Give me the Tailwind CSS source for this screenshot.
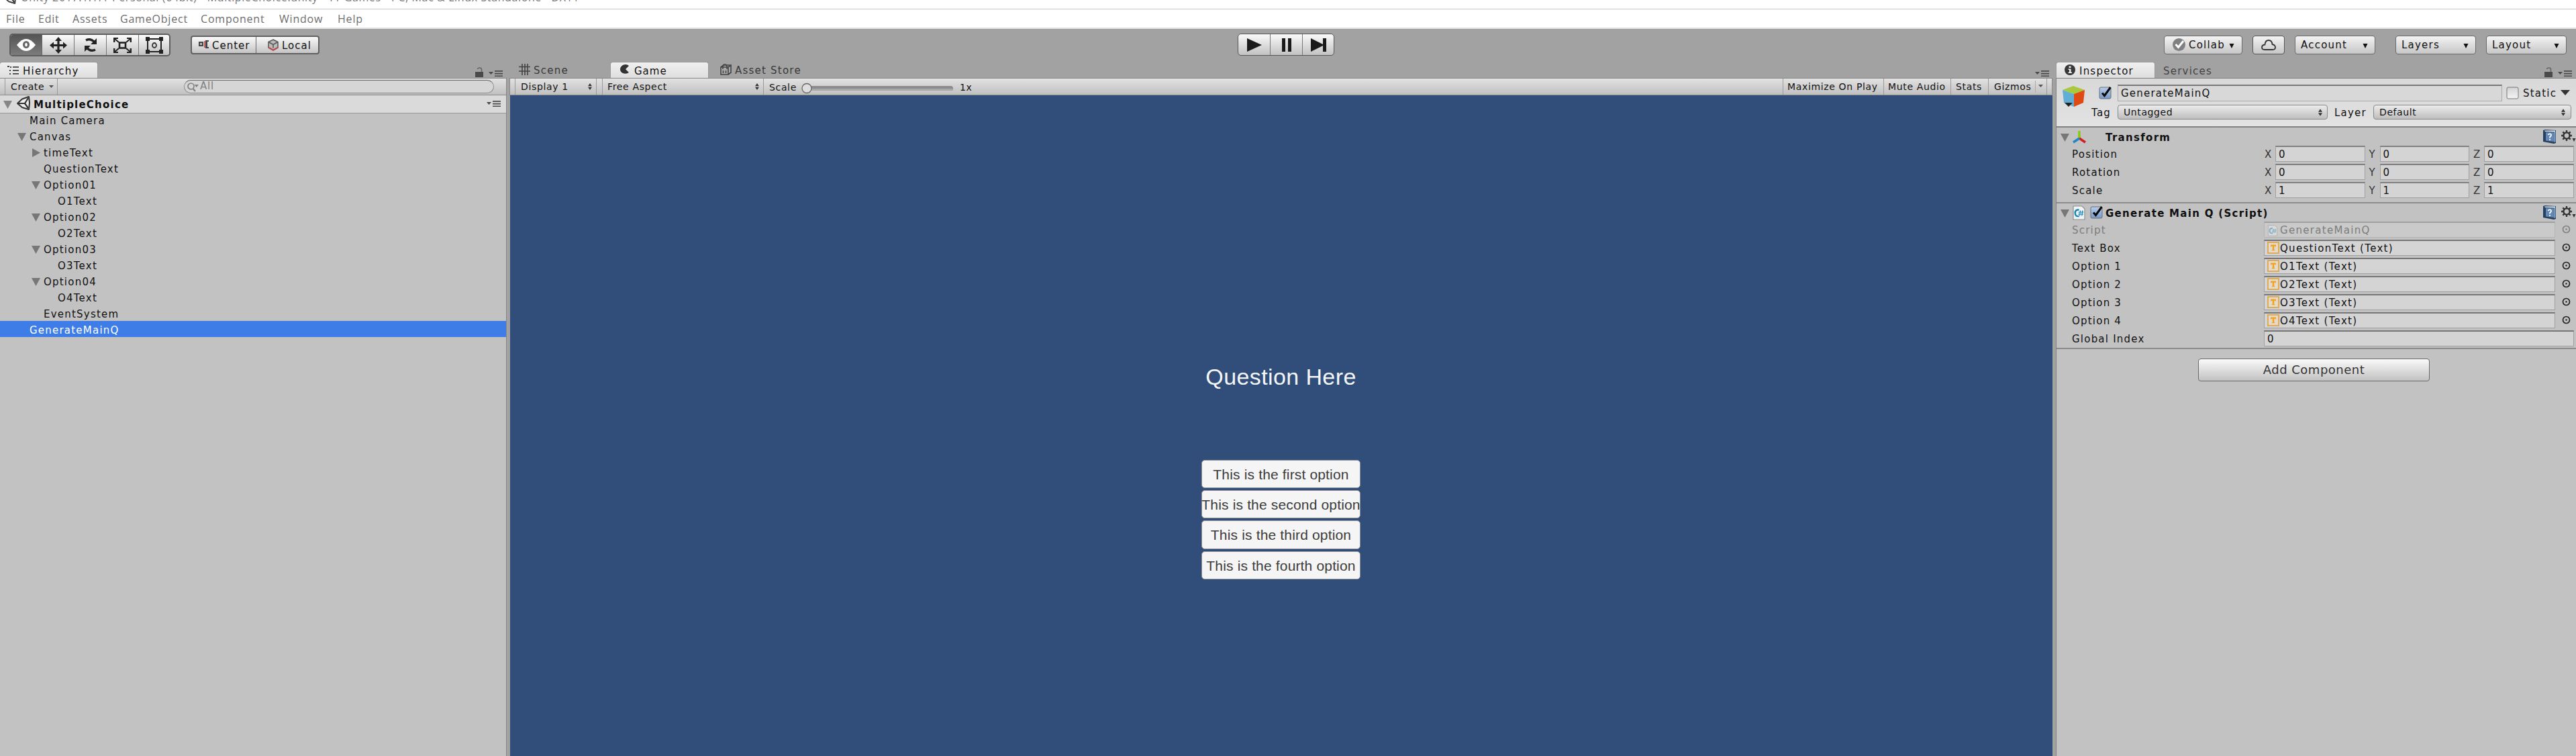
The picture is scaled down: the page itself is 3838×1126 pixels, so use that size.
<!DOCTYPE html>
<html lang="en">
<head>
<meta charset="utf-8">
<title>Unity</title>
<script src="https://cdn.jsdelivr.net/npm/@tailwindcss/browser@4"></script>
</head>
<body class="w-[3838px] h-[1126px] overflow-hidden flex flex-col bg-[#a2a2a2] font-['DejaVu_Sans',sans-serif] text-[15px] tracking-[1.22px] text-[#111] whitespace-nowrap">
<svg class="absolute size-0">
  <symbol id="unity" viewBox="0 0 20 22"><path fill="#eee" stroke="#333" stroke-width="2" stroke-linejoin="round" d="M1 11 8 4.5 18 1 19 10 18 20 8 17z"/><path fill="none" stroke="#333" stroke-width="2.2" d="M2 11h10M12 11l5-8M12 11l5 7"/></symbol>
  <symbol id="down" viewBox="0 0 10 10"><path fill="currentColor" d="M0 0h10L5 10z"/></symbol>
  <symbol id="updown" viewBox="0 0 7 12"><path fill="#333" d="M3.5 0 7 5H0zM0 7h7L3.5 12z"/></symbol>
  <symbol id="lock" viewBox="0 0 12 15"><path fill="#4a4a4a" d="M0 7h12v8H0z"/><path fill="none" stroke="#666" stroke-width="1.6" d="M9.5 7V3.5Q9.500 1 6.500 1 4 1 3.500 3"/></symbol>
  <symbol id="menu" viewBox="0 0 21 10"><path fill="#4a4a4a" d="M0 2h7L3.500 6zM9 0h12v1.700H9zM9 3.700h12v1.700H9zM9 7.400h12v1.700H9z"/></symbol>
  <symbol id="check" viewBox="0 0 20 20"><rect x="1" y="2" width="17" height="17" rx="2" fill="url(#gCheck)" stroke="#66707e"/><path fill="none" stroke="#0a0a0a" stroke-width="3" d="M5 10.500 8.500 14.500 17.500 2"/></symbol>
  <symbol id="box" viewBox="0 0 20 20"><rect x="1" y="2" width="17" height="17" rx="2" fill="url(#gBox)" stroke="#777"/></symbol>
  <symbol id="book" viewBox="0 0 20 21"><path fill="#27405f" d="M0 1 3 0 19 1V20L16 21 0 18z"/><path fill="#dfe9f5" d="M2 1.500 18 1.500V3.500L3 3z"/><path fill="#6288b8" d="M4 4 16 4.500V18L4 16.500z"/><path fill="#8fadd1" d="M16.500 3h1.800v15l-1.800 1z"/><path fill="none" stroke="#fff" stroke-width="1.700" d="M7.500 8Q8 6.300 10 6.400 12.500 6.500 12 8.500 11.800 9.500 10 11v1.500M10 14v2"/></symbol>
  <symbol id="gear" viewBox="0 0 22 18"><circle cx="8" cy="8" r="4.600" fill="none" stroke="#333" stroke-width="2.400"/><g stroke="#333" stroke-width="2.400"><path d="M8 0v3M8 13v3M0 8h3M13 8h3M2.300 2.300l2.200 2.200M11.500 11.500l2.200 2.200M2.300 13.700l2.200-2.200M11.500 4.500l2.200-2.200"/></g><path fill="#333" d="M16.500 12h5L19 17z"/></symbol>
  <symbol id="txt" viewBox="0 0 18 18"><rect x="1" y="1" width="16" height="16" fill="#e2dccf" stroke="#e2a64c" stroke-width="1.800"/><path fill="#f9a01b" d="M5 4.500h8V7.500H11.800V6.800H10.300V12H11.300V13.300H6.800V12H7.800V6.800H6.300V7.500H5z"/></symbol>
  <symbol id="cs" viewBox="0 0 19 22"><path fill="#f0f4f6" stroke="#8c8c8c" stroke-width="1.200" d="M1 1h13l4 4v16H1z"/><path fill="none" stroke="#1683b5" stroke-width="2.400" d="M9.500 6.500Q3.500 6 3.800 11.500 4 17 9.500 16"/><path fill="none" stroke="#1683b5" stroke-width="1.200" d="M11.500 7.500 10.500 15.500M14.800 7.500 13.800 15.500M8.500 10h8M8 13h8"/></symbol>
  <symbol id="pick" viewBox="0 0 13 13"><circle cx="6.500" cy="6.500" r="5" fill="none" stroke="currentColor" stroke-width="1.700"/><circle cx="6.500" cy="6.500" r="1.200" fill="currentColor"/></symbol>
  <linearGradient id="gCheck" x2="0" y2="1"><stop stop-color="#b9cde8"/><stop offset="1" stop-color="#7698c8"/></linearGradient>
  <linearGradient id="gBox" x2="0" y2="1"><stop stop-color="#d4d4d4"/><stop offset="1" stop-color="#f4f4f4"/></linearGradient>
</svg>

<!-- Window title -->
<div class="h-[14px] shrink-0 bg-white border-b border-[#c8c8c8] overflow-hidden flex items-start pl-[6px] font-['Open_Sans',sans-serif] text-[16px] text-[#777] tracking-[0.62px]">
  <svg class="w-[18px] h-[20px] -mt-[13px]"><use href="#unity"/></svg>
  <span class="ml-[7px] -mt-[10px] leading-[13px]">Unity 2017.1.1f1 Personal (64bit) - MultipleChoice.unity - TT Games - PC, Mac &amp; Linux Standalone &lt;DX11&gt;</span>
</div>

<!-- Menu -->
<nav class="h-[29px] shrink-0 bg-white border-b-2 border-[#e4e4e4] flex font-['Open_Sans',sans-serif] text-[16px] text-[#6e6e6e] tracking-[0.8px] leading-[28px] pl-[9px]">
  <span class="w-[48px]">File</span><span class="w-[51px]">Edit</span><span class="w-[71px]">Assets</span><span class="w-[120px]">GameObject</span><span class="w-[117px]">Component</span><span class="w-[87px]">Window</span><span>Help</span>
</nav>

<!-- Main toolbar -->
<header class="h-[49px] shrink-0 flex items-start">
  <div class="ml-[14px] mt-[7px] w-[240px] h-[34px] flex rounded-[5px] border-2 border-[#5c5c5c] bg-linear-to-b from-[#fcfcfc] to-[#c2c2c2] overflow-hidden">
    <div class="w-[47px] flex items-center justify-center bg-linear-to-b from-[#555] to-[#7c7c7c] border-r border-[#666]"><svg class="w-[28px] h-[20px]" viewBox="0 0 28 20"><path fill="#fff" d="M0 10Q14-8 28 10 14 28 0 10z"/><ellipse cx="14" cy="9.500" rx="5" ry="5.500" fill="#666"/><ellipse cx="14" cy="9.500" rx="1.800" ry="2.800" fill="#fff"/></svg></div>
    <div class="w-[48px] flex items-center justify-center border-r border-[#777]"><svg class="w-[26px] h-[25px]" viewBox="0 0 26 25"><path fill="#222" d="M13 0 18 6H14.600V11H20V7.500L26 12.500 20 17.500V14H14.600V19H18L13 25 8 19h3.400V14H6v3.500L0 12.500 6 7.500V11h5.400V6H8z"/></svg></div>
    <div class="w-[48px] flex items-center justify-center border-r border-[#777]"><svg class="w-[22px] h-[22px]" viewBox="0 0 22 22"><path fill="none" stroke="#222" stroke-width="3.400" d="M4 4Q11 .5 17 7M18 18Q11 21.500 5 15"/><path fill="#222" d="M20 1v9h-9zM2 21v-9h9z"/></svg></div>
    <div class="w-[48px] flex items-center justify-center border-r border-[#777]"><svg class="w-[27px] h-[23px]" viewBox="0 0 27 23"><rect x="9" y="7.500" width="9" height="8" fill="none" stroke="#222" stroke-width="2.600"/><path stroke="#222" stroke-width="2" d="M1 1 8 7M26 1 19 7M1 22 8 16M26 22 19 16"/><path fill="#222" d="M0 0h7v2H2.400v5H0zM27 0h-7v2h4.600v5H27zM0 23h7v-2H2.400v-5H0zM27 23h-7v-2h4.600v-5H27z"/></svg></div>
    <div class="flex-1 flex items-center justify-center"><svg class="w-[26px] h-[25px]" viewBox="0 0 26 25"><path fill="none" stroke="#222" stroke-width="2" d="M3 3h20v19H3z"/><path fill="#222" d="M0 0h6v6H0zM20 0h6v6h-6zM0 19h6v6H0zM20 19h6v6h-6z"/><ellipse cx="13" cy="12.500" rx="3" ry="3.500" fill="none" stroke="#333" stroke-width="1.800"/></svg></div>
  </div>
  <div class="ml-[30px] mt-[10px] w-[192px] h-[28px] flex rounded-[4px] border-2 border-[#606060] bg-linear-to-b from-[#fafafa] to-[#c4c4c4] leading-[26px]">
    <div class="w-[96px] flex pl-[10px] border-r border-[#666]"><svg class="w-[16px] h-[12px] mt-[5px]" viewBox="0 0 16 12"><path fill="#444" d="M0 2h7v7H0zM10 0h5v2h-2v8h2v2h-5z"/><path fill="#bbb" d="M2 4h3v3H2z"/><path fill="#c44" d="M8 1h1.500v10H8z"/></svg><span class="ml-[4px] tracking-[1px]">Center</span></div>
    <div class="flex pl-[17px]"><svg class="w-[16px] h-[18px] mt-[3px]" viewBox="0 0 16 18"><path fill="#bbb" stroke="#555" stroke-width="1.500" d="M8 1 15 4.500V13L8 17 1 13V4.500z"/><path fill="none" stroke="#555" stroke-width="1.500" d="M1 4.500 8 8.500 15 4.500M8 8.500v5"/><path fill="none" stroke="#c9434a" stroke-width="2" d="M1 12.500 8 16.500 15 12.500"/></svg><span class="ml-[5px] tracking-[1px]">Local</span></div>
  </div>
  <div class="ml-[1368px] mt-[7px] w-[144px] h-[33px] flex rounded-[5px] border-[1.500px] border-[#555] bg-linear-to-b from-[#fafafa] to-[#c2c2c2]">
    <div class="w-[48px] flex items-center justify-center border-r border-[#777]"><svg class="w-[22px] h-[20px]" viewBox="0 0 22 20"><path fill="#1a1a1a" d="M0 0 22 10 0 20z"/></svg></div>
    <div class="w-[48px] flex items-center justify-center border-r border-[#777]"><svg class="w-[14px] h-[20px]" viewBox="0 0 14 20"><path fill="#1a1a1a" d="M0 0h5v20H0zM9 0h5v20H9z"/></svg></div>
    <div class="flex-1 flex items-center justify-center"><svg class="w-[23px] h-[20px]" viewBox="0 0 23 20"><path fill="#1a1a1a" d="M0 0 18 9V0h5v20h-5V11L0 20z"/></svg></div>
  </div>
  <div class="ml-[1236px] mt-[10px] flex leading-[26px]">
    <div class="w-[117px] h-[28px] flex items-start rounded-[4px] border-[1.500px] border-[#6a6a6a] bg-linear-to-b from-[#f4f4f4] to-[#c6c6c6] pl-[12px]"><svg class="w-[19px] h-[19px] mt-[3px]" viewBox="0 0 19 19"><circle cx="9.500" cy="9.500" r="9.500" fill="#808080"/><path fill="none" stroke="#fff" stroke-width="3" d="M4.500 9 8.500 13.500 16 4"/></svg><span class="ml-[5px] w-[60px]">Collab</span><svg class="w-[8px] h-[7px] mt-[11px]"><use href="#down"/></svg></div>
    <div class="ml-[15px] w-[48px] h-[28px] flex items-center justify-center rounded-[4px] border-[1.500px] border-[#555] bg-linear-to-b from-[#f4f4f4] to-[#c6c6c6]"><svg class="w-[22px] h-[16px]" viewBox="0 0 22 16"><path fill="none" stroke="#333" stroke-width="1.800" d="M5 15Q1 15 1 11.500 1 8 5.500 7.500 6 1 11 1q5 0 5.500 6Q21 8 21 11.500 21 15 17 15z"/></svg></div>
    <div class="ml-[15px] w-[120px] h-[28px] flex items-start rounded-[4px] border-[1.500px] border-[#6a6a6a] bg-linear-to-b from-[#f4f4f4] to-[#c6c6c6] pl-[8px]"><span class="w-[92px]">Account</span><svg class="w-[8px] h-[7px] mt-[11px]"><use href="#down"/></svg></div>
    <div class="ml-[30px] w-[120px] h-[28px] flex items-start rounded-[4px] border-[1.500px] border-[#6a6a6a] bg-linear-to-b from-[#f4f4f4] to-[#c6c6c6] pl-[8px]"><span class="w-[92px]">Layers</span><svg class="w-[8px] h-[7px] mt-[11px]"><use href="#down"/></svg></div>
    <div class="ml-[15px] w-[120px] h-[28px] flex items-start rounded-[4px] border-[1.500px] border-[#6a6a6a] bg-linear-to-b from-[#f4f4f4] to-[#c6c6c6] pl-[8px]"><span class="w-[92px]">Layout</span><svg class="w-[8px] h-[7px] mt-[11px]"><use href="#down"/></svg></div>
  </div>
</header>

<main class="flex flex-1 min-h-0">
  <!-- Hierarchy -->
  <section class="w-[755px] flex flex-col">
    <div class="h-[24px] flex items-start leading-[28px]">
      <div class="w-[146px] h-[24px] flex rounded-t-[4px] bg-linear-to-b from-[#f0f0f0] to-[#dedede] border-r border-t border-[#999] pl-[11px]"><svg class="w-[17px] h-[13px] mt-[5px]" viewBox="0 0 17 13"><path fill="#444" d="M0 0h3v2H0zM4 1h2v2H4zM8 1h9v1.700H8zM3 6h2v2H3zM8 6h9v1.700H8zM3 11h2v2H3zM8 11h9v1.700H8z"/></svg><span class="ml-[6px] -mt-px">Hierarchy</span></div>
      <svg class="ml-[562px] mt-[8px] w-[12px] h-[15px]"><use href="#lock"/></svg>
      <svg class="ml-[8px] mt-[13px] w-[21px] h-[10px]"><use href="#menu"/></svg>
    </div>
    <div class="h-[26px] flex items-start border-t border-b border-[#888] border-r bg-linear-to-b from-[#e2e2e2] to-[#c0c0c0] text-[14px] tracking-[0.6px] leading-[25px]">
      <div class="ml-[7px] w-[79px] h-[24px] border-x border-[#999] flex items-start pl-[8px]"><span class="w-[57px]">Create</span><svg class="w-[7px] h-[4px] mt-[10px] text-[#555]" viewBox="0 0 10 10" preserveAspectRatio="none"><path fill="currentColor" d="M0 0h10L5 10z"/></svg></div>
      <div class="ml-[188px] mt-[2px] w-[462px] h-[20px] rounded-full border-[1.500px] border-[#8c8c8c] border-t-[#666] bg-[#d6d6d6] flex items-start pl-[4px] text-[15px] text-[#808080] leading-[16px]"><svg class="w-[17px] h-[14px] mt-[3px]" viewBox="0 0 17 14"><ellipse cx="5.500" cy="5.500" rx="4.500" ry="4.500" fill="none" stroke="#808080" stroke-width="1.700"/><path stroke="#808080" stroke-width="2" d="M8.500 9 12 13"/><path fill="#808080" d="M10.500 3h6.500L13.700 7z"/></svg><span class="ml-[2px] tracking-[0.8px]">All</span></div>
    </div>
    <div class="flex-1 bg-[#c2c2c2] border-r border-[#888]">
      <div class="h-[27px] flex items-start bg-[#dadada] border-b border-[#999]">
        <svg class="ml-[5px] mt-[8px] w-[13px] h-[12px] text-[#868686]" viewBox="0 0 10 10" preserveAspectRatio="none"><path fill="currentColor" d="M0 0h10L5 10z"/></svg>
        <svg class="ml-[7px] mt-[1px] w-[20px] h-[22px]"><use href="#unity"/></svg>
        <b class="ml-[5px] w-[675px] leading-[28px]">MultipleChoice</b>
        <svg class="mt-[8px] w-[21px] h-[10px]"><use href="#menu"/></svg>
      </div>
      <ul class="-mt-[3px] leading-[28px]" id="tree"></ul>
    </div>
  </section>

  <!-- Game view -->
  <section class="ml-[4px] w-[2299px] flex flex-col">
    <div class="h-[24px] flex items-start leading-[28px]">
      <div class="w-[150px] flex pl-[14px] text-[#3a3a3a]"><svg class="w-[17px] h-[17px] mt-[3px]" viewBox="0 0 17 17"><path stroke="#444" stroke-width="1.600" d="M5 0v17M9 0v17M13 0v17M0 4.500h17M0 11h17"/></svg><span class="ml-[5px] -mt-px">Scene</span></div>
      <div class="w-[147px] h-[24px] flex rounded-t-[4px] bg-linear-to-b from-[#f0f0f0] to-[#dedede] border border-b-0 border-[#999] pl-[14px]"><svg class="w-[14px] h-[14px] mt-[3px]" viewBox="0 0 14 14"><path fill="#333" d="M13 2Q10-1 5 .5 0 3 0 7t4 6q5 2 9-1L8 7z"/></svg><span class="ml-[7px] -mt-px tracking-[1px]">Game</span></div>
      <div class="flex pl-[17px] w-[1976px] text-[#3a3a3a]"><svg class="w-[17px] h-[17px] mt-[3px]" viewBox="0 0 17 17"><path fill="#a8a8a8" stroke="#444" stroke-width="1.600" d="M1 5h11v11H1zM12 5l4-3v11l-4 3M1 5l4-3h11"/><path stroke="#444" stroke-width="1.500" fill="none" d="M4 8V4q0-3 3-3t3 3v4M4.500 10v4M8.500 10v4"/></svg><span class="ml-[5px] -mt-px">Asset Store</span></div>
      <svg class="mt-[13px] w-[21px] h-[10px]"><use href="#menu"/></svg>
    </div>
    <div class="h-[26px] flex items-start border border-[#888] bg-linear-to-b from-[#e2e2e2] to-[#c0c0c0] text-[14px] tracking-[0.65px] leading-[25px]">
      <div class="ml-[7px] w-[122px] h-[24px] border-x border-[#999] flex items-center pl-[8px]"><span class="w-[100px]">Display 1</span><svg class="w-[6px] h-[10px]"><use href="#updown"/></svg></div>
      <div class="ml-[8px] w-[241px] h-[24px] border-x border-[#999] flex items-center pl-[7px]"><span class="w-[220px]">Free Aspect</span><svg class="w-[6px] h-[10px]"><use href="#updown"/></svg></div>
      <span class="ml-[8px] w-[48px] leading-[27px]">Scale</span>
      <svg class="mt-[6px] w-[230px] h-[17px]" viewBox="0 0 230 17"><rect x="8" y="5" width="218" height="7" rx="3.500" fill="#8c8c8c"/><rect x="8" y="9" width="218" height="3" rx="1.500" fill="#a8a8a8"/><circle cx="8" cy="8.500" r="7" fill="#dedede" stroke="#666" stroke-width="1.300"/></svg>
      <span class="ml-[6px] leading-[27px]">1x</span>
      <div class="ml-auto flex h-[24px]">
        <span class="w-[150px] border-l border-[#999] pl-[6px]">Maximize On Play</span><span class="w-[100px] border-l border-[#999] pl-[6px]">Mute Audio</span><span class="w-[56px] border-l border-[#999] pl-[7px]">Stats</span><span class="w-[70px] border-l border-[#999] pl-[8px]">Gizmos</span>
        <div class="w-[18px] border-r border-[#999] flex items-center"><i class="w-px h-[18px] bg-[#aaa]"></i><svg class="ml-[4px] w-[7px] h-[4px] -mt-[3px] text-[#555]" viewBox="0 0 10 10" preserveAspectRatio="none"><path fill="currentColor" d="M0 0h10L5 10z"/></svg></div><i class="w-[7px]"></i>
      </div>
    </div>
    <div class="flex-1 bg-[#304e79] ml-px pl-[1030px] pt-[399px] font-['Liberation_Sans',sans-serif]">
      <div class="w-[237px] flex flex-col items-center">
        <h1 class="h-[40px] leading-[40px] text-[34px] tracking-[0.4px] text-[#f4f6f8]">Question Here</h1>
        <div class="mt-[104px] w-[237px] flex flex-col gap-[3px] text-[21px] tracking-[0.16px] text-[#3c3c3c] leading-[41px] *:flex *:justify-center *:h-[42.200px] *:bg-[#f5f5f5] *:border *:border-[#8d9195] *:rounded-[5px]">
          <div>This is the first option</div><div>This is the second option</div><div>This is the third option</div><div>This is the fourth option</div>
        </div>
      </div>
    </div>
  </section>

  <!-- Inspector -->
  <section class="ml-[5px] w-[775px] flex flex-col">
    <div class="h-[24px] flex items-start leading-[28px]">
      <div class="w-[148px] h-[24px] flex rounded-t-[4px] bg-linear-to-b from-[#f0f0f0] to-[#dedede] border border-b-0 border-[#999] pl-[12px]"><svg class="w-[16px] h-[16px] mt-[3px]" viewBox="0 0 16 16"><circle cx="8" cy="8" r="8" fill="#383838"/><path fill="#eee" d="M6.500 2.500h3V5h-3zM5.500 6.500h4V11.500h1.500V13H5.500V11.500H7V8H5.500z"/></svg><span class="ml-[6px] -mt-px">Inspector</span></div>
      <span class="ml-[12px] w-[568px] text-[#444] -mt-px pt-px">Services</span>
      <svg class="mt-[8px] w-[12px] h-[15px]"><use href="#lock"/></svg>
      <svg class="ml-[8px] mt-[13px] w-[21px] h-[10px]"><use href="#menu"/></svg>
    </div>
    <div class="flex-1 border-l border-t border-[#808080] bg-[#c2c2c2]">
      <div class="h-[73px] bg-linear-to-b from-[#d8d8d8] to-[#e2e2e2] border-b-2 border-[#828282] flex items-start">
        <svg class="ml-[9px] mt-[11px] w-[33px] h-[31px]" viewBox="0 0 33 31"><path fill="#a8c93e" d="M0 6 16 0 33 6 17 12z"/><path fill="#62add6" d="M0 6 17 12V31L2 25z"/><path fill="#df4a13" d="M17 12 33 6 31 25 17 31z"/><path fill="#222" d="M3 25h12L9 31z"/></svg>
        <div class="ml-[10px] pt-[9px] flex-1">
          <div class="flex h-[25px] items-start">
            <svg class="ml-[11px] mt-[2px] w-[20px] h-[20px]"><use href="#check"/></svg>
            <div class="ml-[8px] w-[573px] h-[25px] border border-[#aaa] border-t-2 border-t-[#777] bg-[#d8d8d8] pl-[4px] leading-[23px]">GenerateMainQ</div>
            <svg class="ml-[6px] mt-[2px] w-[20px] h-[20px]"><use href="#box"/></svg>
            <span class="ml-[5px] w-[56px] leading-[26px]">Static</span>
            <svg class="mt-[8px] w-[14px] h-[8px] text-[#333]" viewBox="0 0 10 10" preserveAspectRatio="none"><path fill="currentColor" d="M0 0h10L5 10z"/></svg>
          </div>
          <div class="flex mt-[5px] leading-[25px]">
            <span class="w-[39px]">Tag</span>
            <div class="w-[313px] h-[22px] rounded-[4px] border-[1.500px] border-[#888] bg-linear-to-b from-[#ececec] to-[#bebebe] flex items-center pl-[8px] text-[14px] tracking-[0.6px]"><span class="w-[290px]">Untagged</span><svg class="w-[6px] h-[11px]"><use href="#updown"/></svg></div>
            <span class="ml-[10px] w-[58px]">Layer</span>
            <div class="w-[295px] h-[22px] rounded-[4px] border-[1.500px] border-[#888] bg-linear-to-b from-[#ececec] to-[#bebebe] flex items-center pl-[8px] text-[14px] tracking-[0.6px]"><span class="w-[271px]">Default</span><svg class="w-[6px] h-[11px]"><use href="#updown"/></svg></div>
          </div>
        </div>
      </div>
      <div class="h-[113px] border-b-2 border-[#8c8c8c]">
        <div class="h-[27px] flex items-start">
          <svg class="ml-[6px] mt-[9px] w-[13px] h-[12px] text-[#777]" viewBox="0 0 10 10" preserveAspectRatio="none"><path fill="currentColor" d="M0 0h10L5 10z"/></svg>
          <svg class="ml-[5px] mt-[5px] w-[20px] h-[19px]" viewBox="0 0 20 19"><path stroke="#8ac80a" stroke-width="3.500" d="M10 0v11"/><path stroke="#d41c1c" stroke-width="3.500" d="M10 11l9 6"/><path stroke="#1f86c8" stroke-width="3.500" d="M10 11l-9 6"/></svg>
          <b class="ml-[29px] w-[652px] leading-[31px] tracking-[1.3px]">Transform</b>
          <svg class="mt-[3px] w-[20px] h-[21px]"><use href="#book"/></svg>
          <svg class="ml-[7px] mt-[4px] w-[22px] h-[18px]"><use href="#gear"/></svg>
        </div>
        <div id="vectors"></div>
      </div>
      <div class="h-[217px] border-b-2 border-[#8c8c8c]">
        <div class="h-[27px] flex items-start">
          <svg class="ml-[6px] mt-[9px] w-[13px] h-[12px] text-[#777]" viewBox="0 0 10 10" preserveAspectRatio="none"><path fill="currentColor" d="M0 0h10L5 10z"/></svg>
          <svg class="ml-[5px] mt-[3px] w-[19px] h-[22px]"><use href="#cs"/></svg>
          <svg class="ml-[7px] mt-[3px] w-[20px] h-[20px]"><use href="#check"/></svg>
          <b class="ml-[3px] w-[652px] leading-[31px] tracking-[1.3px]">Generate Main Q (Script)</b>
          <svg class="mt-[3px] w-[20px] h-[21px]"><use href="#book"/></svg>
          <svg class="ml-[7px] mt-[4px] w-[22px] h-[18px]"><use href="#gear"/></svg>
        </div>
        <div id="fields"></div>
      </div>
      <div class="ml-[211px] mt-[14px] w-[345px] h-[34px] rounded-[4px] border-[1.500px] border-[#6a6a6a] bg-linear-to-b from-[#fafafa] to-[#c2c2c2] text-center text-[18px] tracking-[0.5px] leading-[32px] text-[#333]">Add Component</div>
    </div>
  </section>
</main>

<script>
const tri = {
  d: '<svg class="w-[13px] h-[12px] mt-[8px] mr-[5px] ml-[2px] text-[#777]" viewBox="0 0 10 10" preserveAspectRatio="none"><path fill="currentColor" d="M0 0h10L5 10z"/></svg>',
  r: '<svg class="w-[12px] h-[13px] mt-[7px] mr-[5px] ml-[3px] text-[#777]" viewBox="0 0 10 10" preserveAspectRatio="none"><path fill="currentColor" d="M0 0v10L10 5z"/></svg>',
  n: '<i class="w-[20px]"></i>'
};
const nodes = [[0,'n','Main Camera'],[0,'d','Canvas'],[1,'r','timeText'],[1,'n','QuestionText'],[1,'d','Option01'],[2,'n','O1Text'],[1,'d','Option02'],[2,'n','O2Text'],[1,'d','Option03'],[2,'n','O3Text'],[1,'d','Option04'],[2,'n','O4Text'],[1,'n','EventSystem'],[0,'n','GenerateMainQ']];
const sel = 'h-[24px] flex items-start bg-[#3e7de7] text-white', row = 'h-[24px] flex items-start';
document.getElementById('tree').innerHTML = nodes.map(([d,t,s]) =>
  `<li class="${s === 'GenerateMainQ' ? sel : row}" style="padding-left:${24 + d * 21}px">${tri[t]}<span>${s}</span></li>`).join('');

document.getElementById('vectors').innerHTML = [['Position',0],['Rotation',0],['Scale',1]].map(([n,v]) =>
  `<div class="h-[27px] flex items-start leading-[26px] pl-[23px]"><span class="w-[287px]">${n}</span>` +
  ['X','Y','Z'].map(a => `<span class="${a === 'X' ? 'w-[16px] text-[#333]' : 'ml-[6px] w-[16px] text-[#333]'}">${a}</span><div class="w-[133.500px] h-[24px] border border-[#a0a0a0] border-t-2 border-t-[#808080] bg-[#d4d4d4] pl-[4px] leading-[22px]">${v}</div>`).join('') + '</div>').join('');

const box = 'w-[434px] h-[24px] flex border border-[#a0a0a0] border-t-2 border-t-[#777] bg-[#d4d4d4] pl-[4px] leading-[22px]';
const boxOff = 'w-[434px] h-[24px] flex border border-[#b4b4b4] border-t-2 border-t-[#a0a0a0] bg-[#cacaca] pl-[4px] leading-[22px] text-[#7c7c7c]';
document.getElementById('fields').innerHTML =
  [['Script','GenerateMainQ'],['Text Box','QuestionText (Text)'],['Option 1','O1Text (Text)'],['Option 2','O2Text (Text)'],['Option 3','O3Text (Text)'],['Option 4','O4Text (Text)']].map(([n,v],i) =>
  `<div class="h-[27px] flex items-start leading-[26px] pl-[23px]"><span class="${i ? 'w-[286px]' : 'w-[286px] text-[#7c7c7c]'}">${n}</span>` +
  `<div class="${i ? box : boxOff}">${i ? '<svg class="w-[18px] h-[18px] mt-px"><use href="#txt"/></svg>' : '<svg class="w-[16px] h-[17px] mt-[3px] mr-[2px] opacity-40"><use href="#cs"/></svg>'}<span class="ml-px tracking-[1.3px]">${v}</span></div>` +
  `<svg class="${i ? 'ml-[10px] mt-[5px] w-[13px] h-[13px] text-[#222]' : 'ml-[10px] mt-[5px] w-[13px] h-[13px] text-[#808080]'}"><use href="#pick"/></svg></div>`).join('') +
  '<div class="flex items-start leading-[26px] pl-[23px]"><span class="w-[286px]">Global Index</span><div class="w-[462px] h-[24px] border border-[#a0a0a0] border-t-2 border-t-[#777] bg-[#d4d4d4] pl-[4px] leading-[22px]">0</div></div>';
</script>
</body>
</html>
